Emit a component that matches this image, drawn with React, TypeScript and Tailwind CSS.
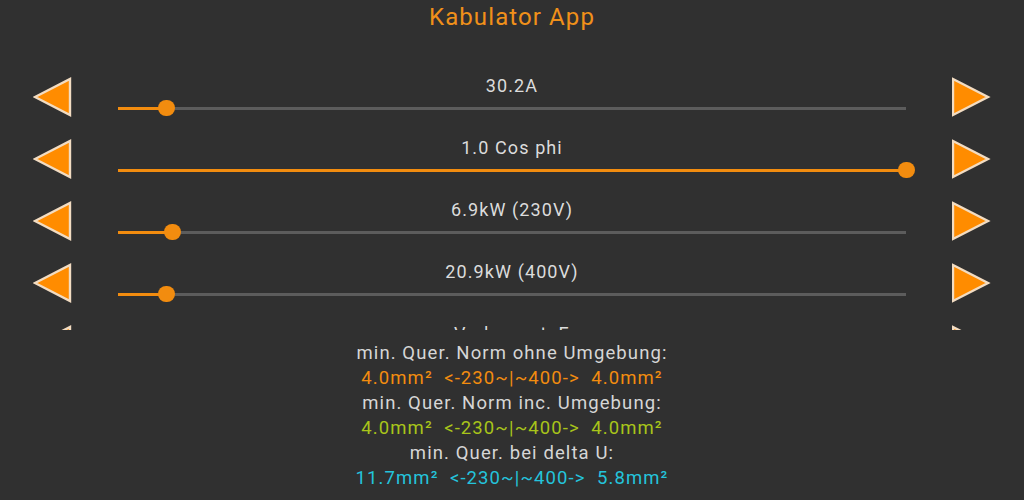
import React from "react";

type Slider = { label: string; pct: number };

const SLIDERS: Slider[] = [
  { label: "30.2A", pct: 6.1 },
  { label: "1.0 Cos phi", pct: 100 },
  { label: "6.9kW (230V)", pct: 6.9 },
  { label: "20.9kW (400V)", pct: 6.1 },
  { label: "Verlegeart: E", pct: 40 },
];

const FONT = { fontFamily: "Roboto, 'Noto Sans', sans-serif" };

function Arrow({ dir }: { dir: "left" | "right" }) {
  const pts = dir === "left" ? "2,20 37,2 37,38" : "1,2 36,20 1,38";
  return (
    <svg width="39" height="41" viewBox="0 0 39 41" className="shrink-0">
      <polygon points={pts} fill="#ff8c00" stroke="#f2dcc2" strokeWidth="2.4" strokeLinejoin="miter" />
    </svg>
  );
}

function Row({ s }: { s: Slider }) {
  return (
    <div className="h-[62px] flex items-center px-[33px]">
      <Arrow dir="left" />
      <div className="flex-1 mx-[46px] pt-[10px] pb-[8px] self-stretch flex flex-col">
        <div className="h-[20px] leading-[20px] text-center text-[18px] tracking-[1.1px] text-[#dcdcdc]">{s.label}</div>
        <div className="h-[24px] relative flex items-center">
          <div className="w-full h-[3px] bg-[#5c5c5c] relative">
            <div className="h-full bg-[#f28c0f]" style={{ width: `${s.pct}%` }} />
          </div>
          <div
            className="absolute top-1/2 w-[17px] h-[16px] -mt-[8px] -ml-[8px] rounded-full bg-[#f28c0f]"
            style={{ left: `${s.pct}%` }}
          />
        </div>
      </div>
      <Arrow dir="right" />
    </div>
  );
}

export default function App() {
  return (
    <div className="w-[1024px] h-[500px] bg-[#303030] overflow-hidden flex flex-col" style={FONT}>
      <div className="h-[66px] shrink-0 text-center">
        <h1 className="text-[24px] tracking-[1.1px] leading-[34px] text-[#f0901a]">Kabulator App</h1>
      </div>

      {/* scrolling list of sliders, clipped */}
      <div className="h-[264px] shrink-0 overflow-hidden">
        {SLIDERS.map((s) => (
          <Row key={s.label} s={s} />
        ))}
      </div>

      {/* results */}
      <div className="pt-[11px] text-center text-[18.5px] tracking-[1.1px] leading-[25px]">
        <div className="text-[#d6d6d6]">min. Quer. Norm ohne Umgebung:</div>
        <div className="text-[#f28c0f] whitespace-pre">4.0mm²  {"<-230~|~400->"}  4.0mm²</div>
        <div className="text-[#d6d6d6]">min. Quer. Norm inc. Umgebung:</div>
        <div className="text-[#a8c41a] whitespace-pre">4.0mm²  {"<-230~|~400->"}  4.0mm²</div>
        <div className="text-[#d6d6d6]">min. Quer. bei delta U:</div>
        <div className="text-[#24c4dc] whitespace-pre">11.7mm²  {"<-230~|~400->"}  5.8mm²</div>
      </div>
    </div>
  );
}
